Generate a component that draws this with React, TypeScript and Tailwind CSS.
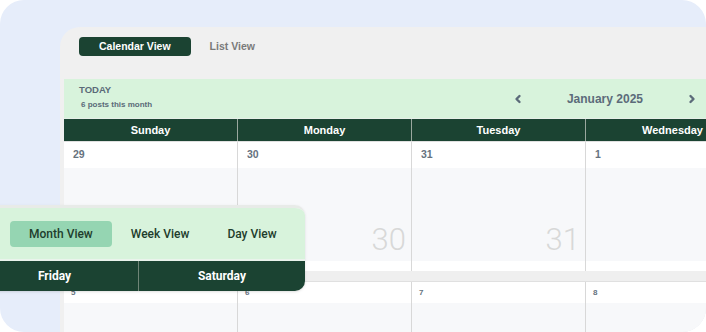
import React from 'react'

const days = ['Sunday', 'Monday', 'Tuesday', 'Wednesday', 'Thursday', 'Friday', 'Saturday']
const week1 = ['29', '30', '31', '1', '2', '3', '4']
const week2 = ['5', '6', '7', '8', '9', '10', '11']

function Chevron({ dir }: { dir: 'left' | 'right' }) {
  return (
    <svg width="8" height="10" viewBox="0 0 8 10" fill="none">
      <path
        d={dir === 'left' ? 'M5.5 2 L2.5 5 L5.5 8' : 'M2.5 2 L5.5 5 L2.5 8'}
        stroke="#5c6b7a"
        strokeWidth="2.4"
        strokeLinecap="round"
        strokeLinejoin="round"
      />
    </svg>
  )
}

function ViewSwitcher() {
  return (
    <div
      className="absolute top-[205px] left-[-29px] w-[334px] rounded-r-[10px] overflow-hidden border-t-[3px] border-[#e8ebe8] shadow-sm"
      style={{ fontFamily: 'Roboto, "Liberation Sans", sans-serif' }}
    >
      <div className="h-[51px] bg-[#d8f3dc] flex items-center pl-[39px]">
        <button className="h-[26px] px-[19px] rounded-[4px] bg-[#95d5b2] text-[12px] font-medium text-[#1e3d2d]">Month View</button>
        <button className="h-[26px] px-[19px] text-[12px] font-medium text-[#1e3d2d]">Week View</button>
        <button className="h-[26px] px-[19px] text-[12px] font-medium text-[#1e3d2d]">Day View</button>
      </div>
      <div className="h-[2px] bg-[#eaf3ec]" />
      <div className="h-[30px] bg-[#1b4332] flex text-white text-[12px] font-bold">
        <div className="w-[168px] flex items-center justify-center border-r border-[#6f8577]">Friday</div>
        <div className="flex-1 flex items-center justify-center">Saturday</div>
      </div>
    </div>
  )
}

export default function App() {
  return (
    <div className="w-[706px] h-[332px] bg-white" style={{ fontFamily: '"Liberation Sans", Arial, sans-serif' }}>
      <div className="relative w-full h-full rounded-[24px] bg-[#e6edfa] overflow-hidden pt-[27px] pl-[60px]">
        <div className="w-[1300px] h-full bg-[#f0f0f0] rounded-tl-[20px] pt-[10px] px-[4px]">
          {/* tabs */}
          <div className="flex items-center gap-[19px] pl-[15px] h-[19px]">
            <button className="h-[19px] px-5 rounded-[4px] bg-[#1b4332] text-white text-[10.5px] font-bold">Calendar View</button>
            <button className="text-[10.5px] font-bold text-[#7a7a7a]">List View</button>
          </div>

          {/* month header */}
          <div className="mt-[23px] w-[650px] h-[39px] bg-[#d8f3dc] flex items-center pl-[15px] pr-[18px]">
            <div className="flex flex-col -mt-[3px]">
              <span className="text-[9.5px] font-bold text-[#5a6a78] leading-[12px]">TODAY</span>
              <span className="text-[8px] font-bold text-[#5a6a78] leading-[10px] mt-[4px] ml-[2px]">6 posts this month</span>
            </div>
            <div className="ml-auto flex items-center gap-[45px] text-[12px] font-bold text-[#5c6b7a]">
              <Chevron dir="left" />
              <span>January 2025</span>
              <Chevron dir="right" />
            </div>
          </div>

          {/* calendar grid */}
          <div className="w-[1218px]">
            <div className="grid grid-cols-7 h-[23px] bg-[#1b4332] border-t border-[#e6efe8]">
              {days.map((d) => (
                <div key={d} className="flex items-center justify-center text-white text-[11px] font-bold border-r border-[#9aa89f]">
                  {d}
                </div>
              ))}
            </div>
            <div className="grid grid-cols-7 border-t border-[#e0e0e0]">
              {week1.map((n) => (
                <div key={n} className="border-r border-[#d8d8d8]">
                  <div className="h-[26px] bg-white flex items-center pl-[9px] text-[10.5px] font-bold text-[#66727e]">{n}</div>
                  <div className="h-[93px] bg-[#f7f8fa] flex items-end justify-end pr-[5px] pb-[6px]">
                    <span className="text-[31px] text-[#d8d8d8] leading-none" style={{ fontFamily: 'Roboto, sans-serif', fontWeight: 300 }}>{n}</span>
                  </div>
                  <div className="h-[10px] bg-white" />
                </div>
              ))}
            </div>
            <div className="h-[11px] bg-[#efefef] border-b border-[#e0e0e0]" />
            <div className="grid grid-cols-7">
              {week2.map((n) => (
                <div key={n} className="border-r border-[#d8d8d8]">
                  <div className="h-[21px] bg-white flex items-center pl-[7px] text-[8px] font-bold text-[#66727e]">{n}</div>
                  <div className="h-[40px] bg-[#f7f8fa]" />
                </div>
              ))}
            </div>
          </div>
        </div>
        <ViewSwitcher />
      </div>
    </div>
  )
}
